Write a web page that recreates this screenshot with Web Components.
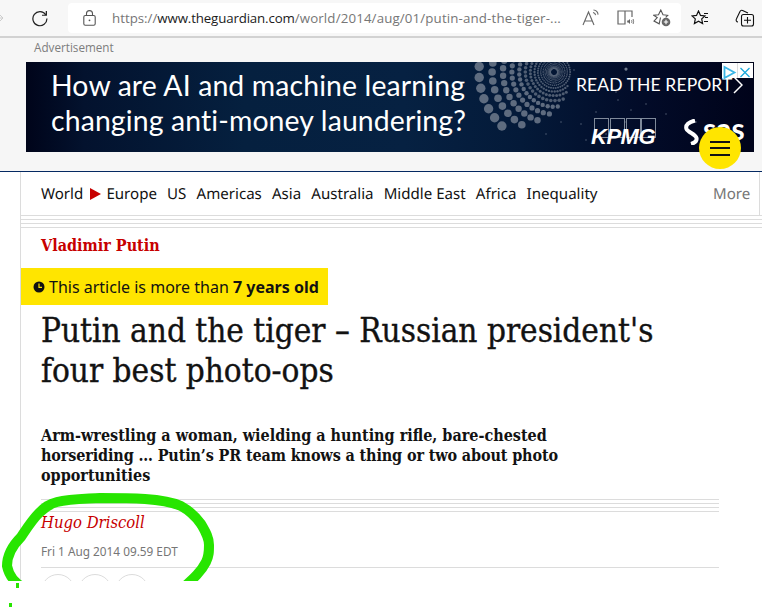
<!DOCTYPE html>
<html><head><meta charset="utf-8">
<style>
html,body{margin:0;padding:0;background:#fff;}
body{width:762px;height:609px;overflow:hidden;position:relative;font-family:"Noto Sans",sans-serif;}
</style></head>
<body>
<browser-bar></browser-bar>
<ad-slot></ad-slot>
<article-page>
  <section-nav></section-nav>
  <article-head></article-head>
</article-page>
<scribble-mark></scribble-mark>
<script>
function def(name,html){customElements.define(name,class extends HTMLElement{constructor(){super();this.attachShadow({mode:'open'}).innerHTML=html;}});}

def('browser-bar',`<style>
:host{display:flex;align-items:center;height:38px;box-sizing:border-box;background:#f7f7f7;border-bottom:2px solid #d2d2d2;padding:0 0 0 0;overflow:hidden;}
svg{display:block;flex:none}
.url{margin-left:19px;width:613px;height:30px;background:#fff;border-radius:4px;display:flex;align-items:center;padding-left:15px;box-sizing:border-box;flex:none}
.t{font:13.3px/30px "Open Sans","Noto Sans",sans-serif;color:#767676;margin-left:16px;width:451px;white-space:nowrap;flex:none}
.t b{font-weight:400;color:#1c1c1c;letter-spacing:-.15px}
.t span{letter-spacing:.14px}
</style>
<svg style="margin-right:27px" width="4" height="10" viewBox="0 0 4 10" fill="none" stroke="#ccc" stroke-width="1"><path d="M-3 5h6M0 2l3 3-3 3"/></svg>
<svg width="18" height="18" viewBox="0 0 19 19" fill="none" stroke="#222" stroke-width="1.3"><path d="M15.6 6.2A7.4 7.4 0 1 0 16.8 10"/><path d="M16.2 2v4.6h-4.6"/></svg>
<div class="url">
<svg width="13" height="16" viewBox="0 0 13 16" fill="none" stroke="#555" stroke-width="1.1"><rect x=".8" y="5.5" width="11.4" height="9.7" rx="1.5"/><path d="M3.5 5.5V3.6a3 3 0 0 1 6 0v1.9"/><circle cx="6.5" cy="10.3" r=".9" fill="#555" stroke="none"/></svg>
<div class="t">https://<b>www.theguardian.com</b><span>/world/2014/aug/01/putin-and-the-tiger-...</span></div>
<svg style="margin-left:19px" width="18" height="18" viewBox="0 0 18 18" fill="none" stroke="#666" stroke-width="1.1"><path d="M1 16 6.5 3 12 16M3 12h7"/><path d="M11 3.5c1.4.2 2.4 1.2 2.6 2.6M11.5 1c2.6.2 4.3 2 4.6 4.6"/></svg>
<svg style="margin-left:17px" width="18" height="16" viewBox="0 0 18 16" fill="none" stroke="#666" stroke-width="1.2"><path d="M8 1H1v13h7V1h7v6"/><path d="M10.2 10.5h1.2l1.6-1.6v5.2l-1.6-1.6h-1.2z" fill="#666" stroke="none"/><path d="M14.5 10c.5.8.5 2.2 0 3M16 9c.8 1.4.8 3.6 0 5" stroke-width=".9"/></svg>
<svg style="margin-left:18px" width="18" height="18" viewBox="0 0 18 18" fill="none" stroke="#555" stroke-width="1.1"><path d="M7.5 8.5 6.2 14.8 1 12l3.2-3.4L.8 6.3 5.5 5.7 7.8 1l2.2 4.7 4.7.6-2 2"/><circle cx="13" cy="13" r="4.3" fill="#666" stroke="none"/><path d="M13 10.8v4.4M10.8 13h4.4" stroke="#fff"/></svg>
<svg style="margin-left:20px" width="18" height="16" viewBox="0 0 18 16" fill="none" stroke="#111" stroke-width="1.2"><path d="M7.5 1 9.5 5.4l4.5.5-3.3 3 .9 4.6-4.1-2.3-4.1 2.3.9-4.6-3.3-3 4.5-.5z"/><path d="M13 3.5h4M14 7.5h3M13 11.5h4" stroke-width="1"/></svg>
<svg style="margin-left:26px" width="20" height="18" viewBox="0 0 20 18" fill="none" stroke="#111" stroke-width="1.1"><path d="M3 13a2 2 0 0 1-1.6-3L5 2.5a2 2 0 0 1 2.6-1L13 4"/><rect x="6.5" y="5.5" width="12" height="11.5" rx="2"/><path d="M12.5 8v6.5M9 11.2h7"/></svg>
`);

def('ad-slot',`<style>
:host{display:block;height:134px;background:#f6f6f6;box-sizing:border-box;padding:0 0 0 26px;position:relative;border-bottom:1px solid #052962}
.lbl{font:11.7px/17px "Open Sans","Noto Sans",sans-serif;color:#7d7d7d;padding:1px 0 0 8px;height:24px;box-sizing:border-box}
.ban{width:728px;height:90px;position:relative;background:linear-gradient(90deg,#00041a 0%,#03122e 8%,#05203f 30%,#062142 52%,#041a39 68%,#020b28 85%,#00031a 100%);overflow:hidden}
.h{position:relative;font:28.4px/35px Lato,sans-serif;color:#fff;padding:6px 0 0 25px;white-space:nowrap;letter-spacing:.13px}
svg.art{position:absolute;left:0;top:0}
.cta{position:absolute;left:550px;top:10px;font:17.5px/26px Lato,sans-serif;color:#fff;white-space:nowrap;letter-spacing:.1px}
.kp{position:absolute;left:565px;top:62px;font:italic 900 22px/26px "Liberation Sans",sans-serif;color:#fff;letter-spacing:-.5px}
.sas{position:absolute;left:677px;top:50px;font:700 30px/32px Lato,sans-serif;color:#fff}
.adc{position:absolute;right:1px;top:1px;display:flex;height:15px}
.adc span{display:block;width:15px;height:15px;background:#fff;}
.adc span+span{border-left:1px solid #ddd}
.menu{position:absolute;left:699px;top:89px;width:42px;height:42px;border-radius:50%;background:#ffe500;display:flex;flex-direction:column;align-items:center;justify-content:center;gap:4.5px;z-index:3}
.menu i{display:block;width:20px;height:2px;background:#121212}
</style>
<div class="lbl">Advertisement</div>
<div class="ban"><svg class="art" id="art" width="728" height="90"></svg>
<div class="h">How are AI and machine learning<br>changing anti-money laundering?</div>
<div class="cta">READ THE REPORT</div>
<svg style="position:absolute;left:707px;top:14px" width="10" height="18" viewBox="0 0 10 18" fill="none" stroke="#fff" stroke-width="1.5"><path d="M1 1l8 8-8 8"/></svg>
<svg style="position:absolute;left:568px;top:56px" width="62" height="21" fill="none" stroke="#7f8a9a" stroke-width="1"><rect x=".5" y=".5" width="14" height="19"/><rect x="16.5" y=".5" width="14" height="19"/><rect x="32.5" y=".5" width="14" height="19"/><rect x="47.5" y=".5" width="14" height="19"/></svg>
<div class="kp">KPMG</div>
<svg style="position:absolute;left:657px;top:57px" width="18" height="26" viewBox="0 0 18 26" fill="none" stroke="#fff" stroke-width="4"><path d="M12 1.5C6 3 2 6 3.5 10c1.5 3.5 9 5 10 9 .6 3-2 5-5.5 6"/></svg>
<div class="sas">sas</div>
<div class="adc"><span><svg width="15" height="15" viewBox="0 0 15 15" fill="none" stroke="#3cb6e6" stroke-width="1.8"><path d="M2.5 2v11l10-5.5z"/></svg></span><span><svg width="14" height="15" viewBox="0 0 14 15" fill="none" stroke="#1aa9dc" stroke-width="1.3"><path d="M2.5 3l9 9M11.5 3l-9 9"/></svg></span></div>
</div>
<div class="menu"><i></i><i></i><i></i></div>
`);
(function(){
 const s=document.querySelector('ad-slot').shadowRoot.getElementById('art');
 let o='';const cx=528,cy=10,n=43;
 let R=75,k=0;
 while(R>3){
  const sz=Math.max(.45,R*0.062);
  const start=R<18?-180:Math.max(-20,131-13*k);
  const end=R<18?180:290;
  for(let j=0;j<n;j++){
   let deg=(j*360/n+k*4.2);
   deg=deg%360;
   let d2=deg; if(R<18&&d2>180)d2-=360;
   if(d2<start||d2>end)continue;
   const a=deg*Math.PI/180;
   const x=cx+R*Math.cos(a),y=cy+R*Math.sin(a);
   o+=`<circle cx="${x.toFixed(1)}" cy="${y.toFixed(1)}" r="${sz.toFixed(1)}" fill="#6f7a8c" opacity="${(R>30?.85:.7)}"/>`;
  }
  R*=0.825;k++;
 }
 const sp=[[620,42],[600,60],[640,52],[580,72],[600,8],[612,75],[560,78],[548,8],[570,50],[592,38],[670,60],[590,30],[605,48],[555,62],[625,20],[535,60],[520,72]];
 sp.forEach(p=>o+=`<circle cx="${p[0]}" cy="${p[1]}" r=".8" fill="#8c97a8" opacity=".55"/>`);
 o+=`<circle cx="600" cy="7" r="1.6" fill="#6f7a8c"/>`;
 s.innerHTML=o;
})();

def('article-page',`<style>
:host{display:block;margin-left:20px;width:742px;height:409px;border-left:1px solid #dcdcdc;background:#fff;box-sizing:border-box;overflow:hidden}
</style><slot></slot>`);

def('section-nav',`<style>
:host{display:flex;align-items:center;height:43px;box-sizing:border-box;padding:1px 0 0 20px;font:15.1px/20px "Noto Sans",sans-serif;text-rendering:geometricPrecision;color:#121212;white-space:nowrap;width:739px;position:relative;border-right:1px solid #dcdcdc}
a{margin-right:10.1px}
.m{position:absolute;left:692px;color:#767676;margin:0}
.arrow{width:0;height:0;border-left:11px solid #c70000;border-top:6px solid transparent;border-bottom:6px solid transparent;margin:0 5px 0 -3px}
</style>
<a>World</a><span class="arrow"></span><a>Europe</a><a>US</a><a>Americas</a><a>Asia</a><a>Australia</a><a>Middle East</a><a>Africa</a><a>Inequality</a><a class="m">More</a>`);

def('article-head',`<style>
:host{display:block;font-family:"DejaVu Serif Condensed","DejaVu Serif",serif}
.rules{height:13px;background:repeating-linear-gradient(#dcdcdc 0 1px,transparent 1px 4px);width:741px}
.kick{font:700 16px/24px "DejaVu Serif Condensed","DejaVu Serif",serif;color:#c70000;padding:6px 0 0 20px;height:40px;box-sizing:border-box}
.age{display:inline-flex;align-items:center;height:37px;width:307px;box-sizing:border-box;background:#ffe500;font:16px/20px "Noto Sans",sans-serif;color:#121212;padding-left:12px;gap:4px;white-space:nowrap;vertical-align:top}
.age b{font-weight:700}
h1{font:400 33px/40px "DejaVu Serif Condensed","DejaVu Serif",serif;-webkit-text-stroke:.35px #121212;color:#121212;margin:6px 0 0 20px;white-space:nowrap}
.st{font:700 16px/20px "DejaVu Serif Condensed","DejaVu Serif",serif;color:#121212;margin:35px 0 0 20px;white-space:nowrap}
.st span{letter-spacing:-.13px}
.r2{height:13px;margin:13px 0 0 20px;width:678px;background:repeating-linear-gradient(#dcdcdc 0 1px,transparent 1px 4px)}
.by{font:italic 400 16.5px/22px "DejaVu Serif Condensed","DejaVu Serif",serif;color:#c70000;margin:0 0 0 20px}
.dt{font:11.8px/16px "Noto Sans",sans-serif;color:#767676;margin:9px 0 0 20px}
.r3{height:1px;background:#dcdcdc;margin:8px 0 0 20px;width:678px}
.soc{display:flex;gap:3px;margin:6px 0 0 20px}
.soc i{display:block;width:34px;height:34px;border:1px solid #dcdcdc;border-radius:50%;box-sizing:border-box}
</style>
<div class="rules"></div>
<div class="kick">Vladimir Putin</div>
<div class="age"><svg width="12" height="12" viewBox="0 0 12 12"><circle cx="6" cy="6" r="5.5" fill="#121212"/><path d="M6 2.5V6.3h3" fill="none" stroke="#ffe500" stroke-width="1.2"/></svg><span>This article is more than <b>7 years old</b></span></div>
<h1>Putin and the tiger – Russian president's<br>four best photo-ops</h1>
<div class="st">Arm-wrestling a woman, wielding a hunting rifle, bare-chested<br><span>horseriding … Putin’s PR team knows a thing or two about photo</span><br>opportunities</div>
<div class="r2"></div>
<div class="by">Hugo Driscoll</div>
<div class="dt">Fri 1 Aug 2014 09.59 EDT</div>
<div class="r3"></div>
<div class="soc"><i></i><i></i><i></i></div>
`);

def('scribble-mark',`<style>
:host{display:block;position:absolute;left:0;top:0;width:762px;height:609px;pointer-events:none}
svg{position:absolute;left:0;top:0}
.cover{position:absolute;left:0;top:581px;width:762px;height:28px;background:#fff}
</style>
<svg width="762" height="609" fill="none"><path d="M24 588C16 584 9 576 7 566 7 556 13 545 21 537 27 528 32 520 39 513 45 507 49 504 57 502 70 499 85 499 100 498 115 498 130 498 145 499 160 500 172 502 181 506 190 511 196 517 201 524 205 531 209 537 209 545 209 552 209 556 206 562 201 572 193 579 183 588" stroke="#27e500" stroke-width="10" stroke-linecap="round" stroke-linejoin="round"/></svg>
<div class="cover"><svg width="30" height="28" fill="#27e500"><rect x="16" y="2" width="3" height="5"/><rect x="9" y="22" width="3" height="4"/></svg></div>
`);
</script>
</body></html>
